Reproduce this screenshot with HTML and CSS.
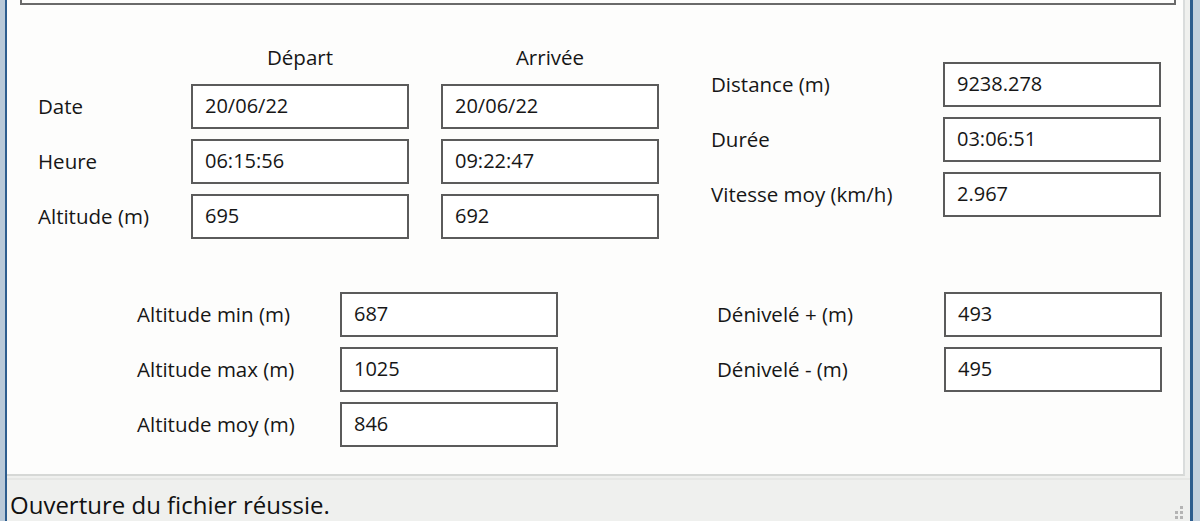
FILE: index.html
```html
<!DOCTYPE html>
<html lang="fr">
<head>
<meta charset="utf-8">
<title>Statistiques du parcours</title>
<link rel="stylesheet" href="styles.css">
</head>
<body>
<div class="window">
  <div class="frame frame-left"></div>
  <div class="client">
    <div class="panel">
      <div class="topbox"></div>
      <div class="upper">
        <div class="grid grid-trip">
          <div class="label"></div>
          <div class="head">Départ</div>
          <div class="head">Arrivée</div>

          <div class="label">Date</div>
          <div class="field">20/06/22</div>
          <div class="field">20/06/22</div>

          <div class="label">Heure</div>
          <div class="field">06:15:56</div>
          <div class="field">09:22:47</div>

          <div class="label">Altitude (m)</div>
          <div class="field">695</div>
          <div class="field">692</div>
        </div>
        <div class="grid grid-summary">
          <div class="label">Distance (m)</div>
          <div class="field">9238.278</div>
          <div class="label">Durée</div>
          <div class="field">03:06:51</div>
          <div class="label">Vitesse moy (km/h)</div>
          <div class="field">2.967</div>
        </div>
      </div>
      <div class="lower">
        <div class="grid grid-alt">
          <div class="label">Altitude min (m)</div>
          <div class="field">687</div>
          <div class="label">Altitude max (m)</div>
          <div class="field">1025</div>
          <div class="label">Altitude moy (m)</div>
          <div class="field">846</div>
        </div>
        <div class="grid grid-den">
          <div class="label">Dénivelé + (m)</div>
          <div class="field">493</div>
          <div class="label">Dénivelé - (m)</div>
          <div class="field">495</div>
        </div>
      </div>
    </div>
    <div class="status">
      <span class="status-text">Ouverture du fichier réussie.</span>
      <span class="grip">
        <svg width="12" height="14" viewBox="0 0 12 14">
          <rect x="8" y="0" width="3" height="3" fill="#b4b4b4"/>
          <rect x="8" y="5" width="3" height="3" fill="#b4b4b4"/>
          <rect x="3" y="5" width="3" height="3" fill="#b4b4b4"/>
          <rect x="8" y="10" width="3" height="3" fill="#b4b4b4"/>
          <rect x="3" y="10" width="3" height="3" fill="#b4b4b4"/>
        </svg>
      </span>
    </div>
  </div>
  <div class="frame frame-right"></div>
</div>
</body>
</html>
```

FILE: styles.css
```css
html, body {
  margin: 0;
  padding: 0;
  width: 1200px;
  height: 521px;
  overflow: hidden;
  background: #f0f0f0;
}

.window {
  display: flex;
  width: 1200px;
  height: 521px;
  font-family: "Open Sans", "Noto Sans", "DejaVu Sans", sans-serif;
  color: #161616;
}

.frame {
  flex: none;
}

.frame-left {
  width: 5px;
  background: #b9c9d8;
  border-right: 2px solid #2d5d8e;
}

.frame-right {
  width: 7px;
  background: #c3d1de;
  border-left: 3px solid #2d5d8e;
}

.client {
  flex: 1;
  display: flex;
  flex-direction: column;
  background: #eff0ee;
  min-width: 0;
}

.panel {
  height: 476px;
  box-sizing: border-box;
  background: #fdfdfc;
  margin-right: 5px;
  border-right: 2px solid #d9dcdc;
  border-bottom: 2px solid #d6d8d6;
  display: flex;
  flex-direction: column;
}

.topbox {
  height: 5px;
  margin: 0 7px 0 13px;
  box-sizing: border-box;
  border: 2px solid #6a6a6a;
  border-top: none;
}

.upper {
  display: flex;
  align-items: flex-start;
  padding-left: 31px;
  gap: 52px;
}

.lower {
  display: flex;
  align-items: flex-start;
  padding-left: 130px;
  margin-top: 53px;
  gap: 159px;
}

.grid {
  display: grid;
  row-gap: 10px;
  align-items: center;
}

.grid-trip {
  margin-top: 40px;
  grid-template-columns: 121px 218px 218px;
  grid-template-rows: 29px repeat(3, 45px);
  column-gap: 32px;
}

.grid-summary {
  margin-top: 57px;
  grid-template-columns: 232px 218px;
  grid-auto-rows: 45px;
}

.grid-alt {
  grid-template-columns: 203px 218px;
  grid-auto-rows: 45px;
}

.grid-den {
  grid-template-columns: 227px 218px;
  grid-auto-rows: 45px;
}

.head {
  align-self: start;
  text-align: center;
  font-size: 20.5px;
  line-height: 24px;
}

.label {
  font-size: 20.5px;
  line-height: 24px;
  white-space: nowrap;
  padding-bottom: 2px;
}

.field {
  height: 45px;
  box-sizing: border-box;
  border: 2px solid #5b5b5b;
  background: #ffffff;
  padding: 0 0 3px 12px;
  font-size: 20px;
  display: flex;
  align-items: center;
  white-space: nowrap;
}

.status {
  flex: 1;
  display: flex;
  align-items: flex-end;
  justify-content: space-between;
  border-top: 2px solid #e6e7e5;
  margin-top: 2px;
  padding: 0 6px 0 3px;
}

.status-text {
  font-size: 24px;
  line-height: 33px;
  color: #111;
}

.grip {
  display: flex;
  margin-bottom: 1px;
}
```
